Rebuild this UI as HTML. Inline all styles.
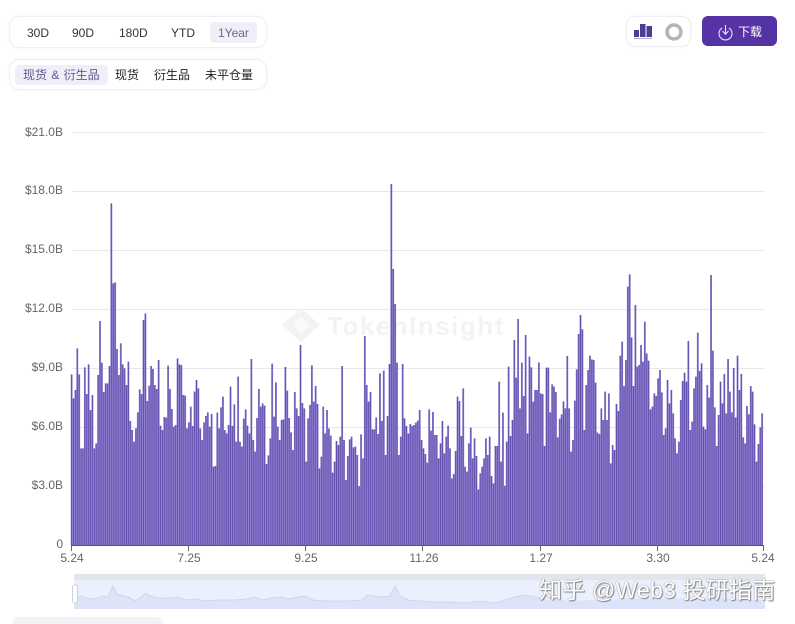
<!DOCTYPE html>
<html><head><meta charset="utf-8"><style>
html,body{margin:0;padding:0;background:#fff}
#r{position:relative;width:795px;height:624px;overflow:hidden;background:#fff;font-family:"Liberation Sans","Noto Sans CJK SC",sans-serif;font-size:12px;color:#333;filter:blur(.3px)}
.box{position:absolute;box-sizing:border-box;border:1px solid #eeeef5;border-radius:11px;background:#fff;box-shadow:0 0 3px #f4f4f8}
.t{position:absolute;white-space:nowrap;line-height:14px}
.hl{position:absolute;background:#f0eff8;border-radius:4px}
svg{position:absolute;left:0;top:0}
</style></head><body><div id="r">
<div class="box" style="left:9px;top:16px;width:258px;height:32px"></div>
<div class="hl" style="left:210px;top:22px;width:47px;height:21px"></div>
<div class="t" style="left:27px;top:26px">30D</div>
<div class="t" style="left:72px;top:26px">90D</div>
<div class="t" style="left:119px;top:26px">180D</div>
<div class="t" style="left:171px;top:26px">YTD</div>
<div class="t" style="left:218px;top:26px;color:#6a6790">1Year</div>
<div class="box" style="left:9px;top:59px;width:258px;height:31px"></div>
<div class="hl" style="left:15px;top:65px;width:93px;height:20px"></div>
<div class="t" style="left:23px;top:68px;color:#5f5a8f;word-spacing:1px">现货 &amp; 衍生品</div>
<div class="t" style="left:115px;top:68px;color:#222">现货</div>
<div class="t" style="left:154px;top:68px;color:#222">衍生品</div>
<div class="t" style="left:205px;top:68px;color:#222">未平仓量</div>
<div class="box" style="left:626px;top:16px;width:65px;height:31px;border-radius:9px"></div>
<div style="position:absolute;left:702px;top:16px;width:75px;height:30px;background:#5533a5;border-radius:6px"></div>
<div class="t" style="left:738px;top:25px;color:#fff">下载</div>

<svg width="795" height="624" viewBox="0 0 795 624">
<defs><pattern id="p" patternUnits="userSpaceOnUse" x="32" y="0" width="5.67" height="20"><rect width="5.67" height="20" fill="#9384d2"/><rect x="1.8" width="2" height="20" fill="#4d379d"/></pattern></defs>
<g fill="#4b3f92"><rect x="634" y="30" width="5" height="7"/><rect x="640" y="24" width="5.500" height="13"/><rect x="646.500" y="26" width="5.500" height="11"/><rect x="634" y="38" width="18" height="1" fill="#b4b2d0"/></g>
<circle cx="674" cy="32" r="7" fill="none" stroke="#b4b4b4" stroke-width="3.500"/>
<g fill="none" stroke="#e8e2f6" stroke-width="1.1"><path d="M722 28a6.500 6.500 0 1 0 7 0"/><path d="M725.500 25v9M722.500 31l3 3.200 3-3.200"/></g>
<g stroke="#e8e8ec" stroke-width="1"><path d="M72 132.500H765M72 191.500H765M72 250.500H765M72 309.500H765M72 368.500H765M72 427.500H765M72 486.500H765"/></g>
<path d="M301 308L320 325 301 342 282 325z" fill="#f3f3f5"/>
<path d="M301 316l-9 9 9 9 9-9z" fill="#fafafa"/>
<text x="327" y="335" font-family="Liberation Sans" font-weight="bold" font-size="26" letter-spacing="1.500" fill="#f3f3f5">TokenInsight</text>
<g font-size="12" fill="#666" text-anchor="end" font-family="Liberation Sans"><text x="63" y="136">$21.0B</text><text x="63" y="194">$18.0B</text><text x="63" y="253">$15.0B</text><text x="63" y="312">$12.0B</text><text x="63" y="371">$9.0B</text><text x="63" y="430">$6.0B</text><text x="63" y="489">$3.0B</text><text x="63" y="548">0</text></g>
<path fill="url(#p)" transform="translate(60 180) scale(.33365 .33333)" d="M32 1095V583h5.67V655h5.67V630h5.67V505h5.67V583h5.67V805h5.67V805h5.67V562h5.67V642h5.67V553h5.67V690h5.67V645h5.67V805h5.67V790h5.67V585h5.67V423h5.67V548h5.67V636h5.67V610h5.67V610h5.67V558h5.67V70h5.67V310h5.67V307h5.67V507h5.67V585h5.67V490h5.67V553h5.67V565h5.67V615h5.67V545h5.67V723h5.67V750h5.67V785h5.67V745h5.67V697h5.67V628h5.67V642h5.67V420h5.67V400h5.67V663h5.67V617h5.67V558h5.67V567h5.67V615h5.67V627h5.67V540h5.67V737h5.67V750h5.67V711h5.67V713h5.67V557h5.67V627h5.67V687h5.67V740h5.67V735h5.67V535h5.67V553h5.67V555h5.67V645h5.67V647h5.67V745h5.67V727h5.67V680h5.67V738h5.67V635h5.67V600h5.67V625h5.67V745h5.67V780h5.67V727h5.67V708h5.67V697h5.67V740h5.67V702h5.67V860h5.67V858h5.67V698h5.67V745h5.67V682h5.67V650h5.67V750h5.67V760h5.67V735h5.67V620h5.67V738h5.67V673h5.67V785h5.67V590h5.67V785h5.67V800h5.67V716h5.67V688h5.67V737h5.67V760h5.67V537h5.67V780h5.67V815h5.67V714h5.67V627h5.67V680h5.67V670h5.67V677h5.67V852h5.67V826h5.67V775h5.67V551h5.67V710h5.67V607h5.67V740h5.67V780h5.67V720h5.67V718h5.67V561h5.67V632h5.67V714h5.67V757h5.67V810h5.67V636h5.67V685h5.67V708h5.67V495h5.67V669h5.67V685h5.67V845h5.67V715h5.67V675h5.67V556h5.67V665h5.67V618h5.67V672h5.67V865h5.67V830h5.67V680h5.67V760h5.67V690h5.67V745h5.67V767h5.67V878h5.67V845h5.67V783h5.67V795h5.67V770h5.67V558h5.67V780h5.67V900h5.67V828h5.67V778h5.67V770h5.67V802h5.67V800h5.67V825h5.67V918h5.67V763h5.67V835h5.67V468h5.67V615h5.67V665h5.67V636h5.67V748h5.67V748h5.67V712h5.67V762h5.67V580h5.67V723h5.67V572h5.67V825h5.67V708h5.67V552h5.67V12h5.67V267h5.67V372h5.67V548h5.67V825h5.67V770h5.67V552h5.67V715h5.67V738h5.67V760h5.67V732h5.67V738h5.67V735h5.67V728h5.67V722h5.67V690h5.67V780h5.67V805h5.67V822h5.67V848h5.67V688h5.67V752h5.67V696h5.67V765h5.67V765h5.67V835h5.67V790h5.67V723h5.67V820h5.67V770h5.67V737h5.67V805h5.67V895h5.67V882h5.67V813h5.67V650h5.67V663h5.67V768h5.67V625h5.67V860h5.67V875h5.67V790h5.67V743h5.67V835h5.67V775h5.67V828h5.67V928h5.67V880h5.67V860h5.67V835h5.67V775h5.67V825h5.67V770h5.67V888h5.67V910h5.67V798h5.67V798h5.67V605h5.67V845h5.67V698h5.67V917h5.67V785h5.67V560h5.67V768h5.67V720h5.67V480h5.67V593h5.67V417h5.67V685h5.67V548h5.67V648h5.67V465h5.67V760h5.67V530h5.67V562h5.67V665h5.67V630h5.67V630h5.67V547h5.67V640h5.67V642h5.67V798h5.67V563h5.67V563h5.67V697h5.67V613h5.67V620h5.67V636h5.67V772h5.67V716h5.67V703h5.67V664h5.67V685h5.67V528h5.67V685h5.67V815h5.67V780h5.67V662h5.67V568h5.67V462h5.67V405h5.67V448h5.67V750h5.67V615h5.67V570h5.67V527h5.67V538h5.67V540h5.67V608h5.67V758h5.67V762h5.67V685h5.67V720h5.67V635h5.67V720h5.67V640h5.67V850h5.67V795h5.67V810h5.67V672h5.67V693h5.67V527h5.67V485h5.67V618h5.67V540h5.67V320h5.67V283h5.67V472h5.67V618h5.67V375h5.67V560h5.67V555h5.67V495h5.67V545h5.67V425h5.67V520h5.67V542h5.67V688h5.67V680h5.67V640h5.67V648h5.67V595h5.67V570h5.67V637h5.67V765h5.67V745h5.67V600h5.67V670h5.67V630h5.67V700h5.67V775h5.67V820h5.67V785h5.67V660h5.67V603h5.67V578h5.67V605h5.67V483h5.67V750h5.67V725h5.67V625h5.67V590h5.67V458h5.67V573h5.67V550h5.67V740h5.67V748h5.67V615h5.67V653h5.67V285h5.67V512h5.67V682h5.67V798h5.67V705h5.67V605h5.67V670h5.67V582h5.67V700h5.67V537h5.67V635h5.67V697h5.67V564h5.67V712h5.67V527h5.67V630h5.67V582h5.67V772h5.67V790h5.67V678h5.67V703h5.67V618h5.67V635h5.67V733h5.67V845h5.67V792h5.67V742h5.67V700h5.67V1095z"/>
<path d="M71.500 545.500H763.500" stroke="#555" stroke-width="1"/>
<path d="M71.500 545V551M188.500 545V551M305.500 545V551M422.500 545V551M540.500 545V551M657.500 545V551M763.500 545V551" stroke="#666" stroke-width="1"/>
<g font-size="12" fill="#666" text-anchor="middle" font-family="Liberation Sans"><text x="72" y="562">5.24</text><text x="189" y="562">7.25</text><text x="306" y="562">9.25</text><text x="424" y="562">11.26</text><text x="541" y="562">1.27</text><text x="658" y="562">3.30</text><text x="763" y="562">5.24</text></g>
<rect x="74" y="574" width="691" height="35" fill="#eaf0fe"/>
<rect x="74" y="574" width="691" height="6" fill="#e3e5eb"/>
<path fill="#dde3f8" d="M74 609V601L80 596 86 598 92 599 98 598 103 596 108 597 113 586 117 594 124 596 130 598 135 601 140 598 146 593 150 596 158 598 168 598 178 597 185 600 195 599 205 601 215 600 225 600 235 600 245 599 255 597 262 600 272 598 280 597 288 599 298 597 305 596 313 600 325 601 338 601 350 601 362 600 367 595 380 597 390 596 395 586 400 596 408 600 420 601 435 602 450 602 465 603 480 601 495 603 505 600 515 597 525 595 535 597 545 599 560 600 575 601 590 600 610 600 630 598 650 599 670 598 690 599 710 598 730 599 750 600 765 600V609z"/>
<path fill="none" stroke="#ccd2e4" stroke-width=".8" d="M74 601L80 596 86 598 92 599 98 598 103 596 108 597 113 586 117 594 124 596 130 598 135 601 140 598 146 593 150 596 158 598 168 598 178 597 185 600 195 599 205 601 215 600 225 600 235 600 245 599 255 597 262 600 272 598 280 597 288 599 298 597 305 596 313 600 325 601 338 601 350 601 362 600 367 595 380 597 390 596 395 586 400 596 408 600 420 601 435 602 450 602 465 603 480 601 495 603 505 600 515 597 525 595 535 597 545 599"/>
<rect x="72.500" y="585" width="5" height="18" rx="2" fill="#fff" stroke="#c0c4cc" stroke-width=".8"/>
</svg>
<div style="position:absolute;left:12px;top:617px;width:151px;height:14px;background:#f3f3f7;border-radius:10px"></div>
<div class="t" style="left:539px;top:577px;font-size:23px;line-height:26px;color:#fff;letter-spacing:.2px;font-family:'Liberation Sans','Noto Sans CJK SC',sans-serif;text-shadow:0 0 1.500px #777,1px 1px 1px #888">知乎 @Web3 投研指南</div>
</div></body></html>
